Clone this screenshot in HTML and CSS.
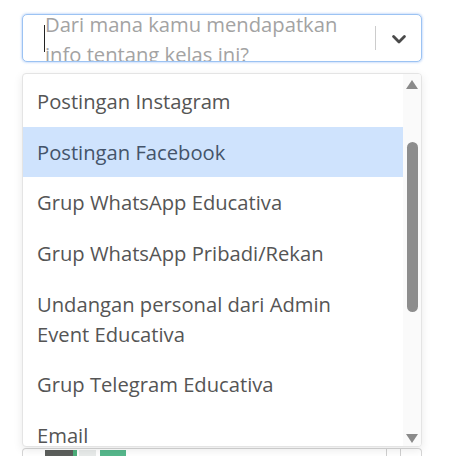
FILE: index.html
```html
<!DOCTYPE html>
<html lang="id">
<head>
<meta charset="utf-8">
<title>Pilih sumber info</title>
<link rel="stylesheet" href="styles.css">
</head>
<body>
<div class="page">
  <div class="field">
    <div class="control">
      <div class="value">
        <span class="caret"></span>
        <span class="placeholder">Dari mana kamu mendapatkan info tentang kelas ini?</span>
      </div>
      <div class="indicators">
        <span class="sep"></span>
        <span class="chevron">
          <svg width="14" height="9" viewBox="0 0 14 9"><path d="M1.6 1.6 L7 7 L12.4 1.6" fill="none" stroke="#4a4a4a" stroke-width="2.8" stroke-linecap="round" stroke-linejoin="round"/></svg>
        </span>
      </div>
    </div>
    <div class="menu">
      <ul class="options">
        <li class="option">Postingan Instagram</li>
        <li class="option focused">Postingan Facebook</li>
        <li class="option">Grup WhatsApp Educativa</li>
        <li class="option">Grup WhatsApp Pribadi/Rekan</li>
        <li class="option">Undangan personal dari Admin<br>Event Educativa</li>
        <li class="option">Grup Telegram Educativa</li>
        <li class="option">Email</li>
      </ul>
      <div class="scrollbar">
        <span class="arrow up"></span>
        <span class="thumb"></span>
        <span class="arrow down"></span>
      </div>
    </div>
  </div>
  <div class="card">
    <div class="thumbs">
      <span class="t dark"></span>
      <span class="t line"></span>
      <span class="t light"></span>
      <span class="t green"></span>
    </div>
    <span class="vline a"></span>
    <span class="vline b"></span>
  </div>
</div>
</body>
</html>
```
FILE: styles.css
```css
html, body {
  margin: 0;
  padding: 0;
  background: #ffffff;
}
body {
  font-family: "Open Sans", "Noto Sans", sans-serif;
  overflow: hidden;
  height: 456px;
}
.page {
  padding: 14px 38px 0 22px;
}
.field {
  position: relative;
  width: 400px;
}
.control {
  box-sizing: border-box;
  height: 48px;
  border: 1px solid #9cc3f3;
  border-radius: 5px;
  box-shadow: 0 0 2px 1px rgba(120, 170, 240, 0.35);
  display: flex;
  overflow: hidden;
  background: #fff;
}
.value {
  flex: 1;
  display: grid;
  grid-template-rows: minmax(0, 1fr);
  padding: 0 8px 0 21px;
  min-width: 0;
}
.value > * {
  grid-area: 1 / 1;
  align-self: center;
  align-self: unsafe center;
}
.caret {
  width: 1px;
  height: 27px;
  background: #222;
}
.placeholder {
  margin-left: 1px;
  font-size: 20.2px;
  line-height: 30px;
  color: #a3a3a3;
  padding-top: 2px;
}
.indicators {
  display: flex;
  align-items: center;
  width: 46px;
}
.sep {
  width: 1px;
  height: 24px;
  background: #cccccc;
}
.chevron {
  flex: 1;
  display: flex;
  justify-content: center;
  align-items: center;
  padding-top: 2px;
}
.menu {
  position: absolute;
  top: calc(100% + 11px);
  left: 0;
  right: 0;
  height: 374px;
  box-sizing: border-box;
  border: 1px solid #e4e4e4;
  border-radius: 4px;
  box-shadow: 0 3px 10px rgba(0, 0, 0, 0.09);
  background: #fff;
  display: flex;
  overflow: hidden;
  z-index: 2;
}
.options {
  list-style: none;
  margin: 0;
  padding: 2px 0 0;
  flex: 1;
}
.option {
  font-size: 20.2px;
  line-height: 30px;
  padding: 10.3px 14px;
  color: #555555;
}
.option.focused {
  background: #cfe3fd;
  color: #44546a;
}
.scrollbar {
  width: 18px;
  background: #fafafa;
  display: flex;
  flex-direction: column;
  align-items: center;
}
.arrow {
  width: 0;
  height: 0;
  border-left: 6px solid transparent;
  border-right: 6px solid transparent;
}
.arrow.up {
  margin-top: 6px;
  border-bottom: 9px solid #8a8a8a;
}
.arrow.down {
  margin-top: auto;
  margin-bottom: 3px;
  border-top: 9px solid #8a8a8a;
}
.thumb {
  margin-top: 53px;
  width: 11px;
  height: 170px;
  border-radius: 6px;
  background: #8d8d8d;
}
.card {
  margin-top: 386px;
  width: 400px;
  height: 8px;
  box-sizing: border-box;
  border: 1px solid #d6d6d6;
  border-bottom: 0;
  border-radius: 4px 4px 0 0;
  display: flex;
  position: relative;
}
.thumbs {
  display: flex;
  margin: 1px 0 0 22px;
  height: 7px;
}
.t {
  display: block;
  height: 7px;
}
.t.dark { width: 28px; background: #5c5f5c; }
.t.line { width: 4px; background: #4caf7a; margin-right: 2px; }
.t.light { width: 17px; background: #e8ebea; margin-right: 4px; }
.t.green { width: 26px; background: #56b88c; }
.vline {
  position: absolute;
  top: 0;
  bottom: 0;
  width: 1px;
  background: #d0d0d0;
}
.vline.a { left: 363px; }
.vline.b { left: 377px; }
```
